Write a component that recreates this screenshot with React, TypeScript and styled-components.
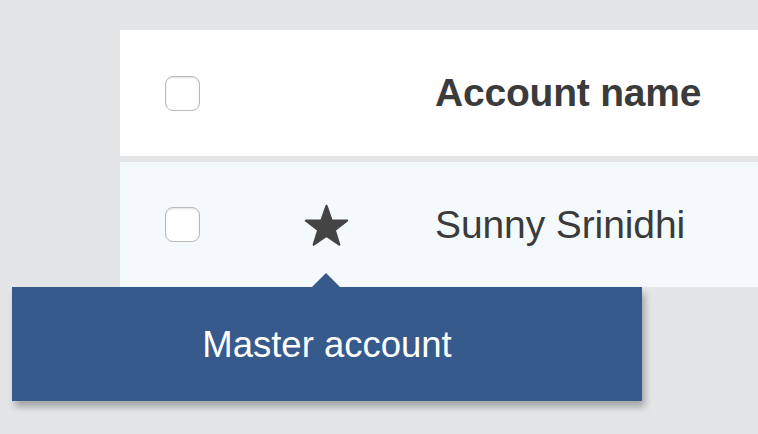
import React from "react";
import styled, { createGlobalStyle } from "styled-components";

const Global = createGlobalStyle`
  html, body { margin: 0; padding: 0; background: #e4e5e7; }
  body { font-family: "Liberation Sans", Arial, sans-serif; overflow: hidden; }
`;

const Page = styled.div`
  width: 758px;
  height: 434px;
  padding: 30px 0 0 120px;
  box-sizing: border-box;
  overflow: hidden;
`;

const Card = styled.div`
  width: 700px;
  display: flex;
  flex-direction: column;
  gap: 6px;
`;

const Row = styled.div<{ $header?: boolean }>`
  position: relative;
  display: grid;
  grid-template-columns: 115px 200px 1fr;
  align-items: center;
  height: ${(p) => (p.$header ? 126 : 125)}px;
  background: ${(p) => (p.$header ? "#ffffff" : "#f4f9fc")};
`;

const CheckCell = styled.div`
  padding-left: 45px;
  display: flex;
  align-items: center;
`;

const Checkbox = styled.span`
  width: 35px;
  height: 35px;
  box-sizing: border-box;
  border: 1.5px solid #b9b9b9;
  border-radius: 8px;
  background: #fff;
  box-shadow: inset 0 1px 2px rgba(0, 0, 0, 0.12);
`;

const IconCell = styled.div`
  padding-left: 69px;
  display: flex;
  align-items: center;
`;

const NameCell = styled.div<{ $bold?: boolean }>`
  font-size: 39px;
  font-weight: ${(p) => (p.$bold ? 700 : 400)};
  color: #3b3b3b;
  white-space: nowrap;
  letter-spacing: ${(p) => (p.$bold ? "-0.2px" : "-0.1px")};
`;

const Tooltip = styled.div`
  position: absolute;
  top: 100%;
  left: -108px;
  width: 630px;
  height: 114px;
  background: #365a8b;
  color: #fff;
  font-size: 36.5px;
  display: flex;
  align-items: center;
  justify-content: center;
  box-shadow: 3px 6px 7px rgba(0, 0, 0, 0.28);
  z-index: 2;
  &::before {
    content: "";
    position: absolute;
    top: -14px;
    left: 300px;
    border-left: 14px solid transparent;
    border-right: 14px solid transparent;
    border-bottom: 14px solid #365a8b;
  }
`;

const TooltipText = styled.span`
  margin-top: 2px;
`;

const Star = () => (
  <svg width="45" height="42" viewBox="0 0 100 94" aria-hidden>
    <polygon
      points="50,4 61.5,37 96,37.4 68.4,58.2 78.6,91 50,71.4 21.4,91 31.6,58.2 4,37.4 38.5,37"
      fill="#444444"
      stroke="#444444"
      strokeWidth="5"
      strokeLinejoin="round"
    />
  </svg>
);

export default function App() {
  return (
    <>
      <Global />
      <Page>
        <Card>
          <Row $header>
            <CheckCell>
              <Checkbox />
            </CheckCell>
            <div />
            <NameCell $bold>Account name</NameCell>
          </Row>
          <Row>
            <CheckCell>
              <Checkbox />
            </CheckCell>
            <IconCell>
              <Star />
            </IconCell>
            <NameCell>Sunny Srinidhi</NameCell>
            <Tooltip>
              <TooltipText>Master account</TooltipText>
            </Tooltip>
          </Row>
        </Card>
      </Page>
    </>
  );
}
